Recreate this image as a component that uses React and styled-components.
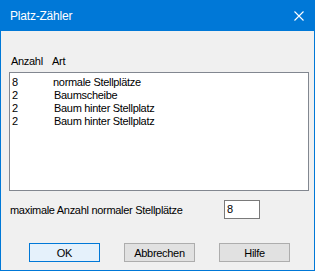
import React from 'react';
import styled, { createGlobalStyle } from 'styled-components';

const GlobalStyle = createGlobalStyle`
  html, body {
    margin: 0;
    padding: 0;
    background: #ffffff;
  }
  * {
    box-sizing: border-box;
  }
`;

const Window = styled.div`
  width: 315px;
  height: 271px;
  display: flex;
  flex-direction: column;
  background: #f0f0f0;
  border: 1px solid #0078d7;
  border-top: none;
  font-family: "Liberation Sans", Arial, sans-serif;
  font-size: 11px;
  letter-spacing: -0.3px;
  color: #000;
`;

const TitleBar = styled.div`
  height: 31px;
  margin: 0 -1px;
  background: #0078d7;
  color: #fff;
  display: flex;
  align-items: center;
  justify-content: space-between;
  padding: 0 10px 0 10px;
  font-size: 12px;
  letter-spacing: -0.2px;
`;

const Title = styled.span`
  padding-top: 1px;
`;

const CloseIcon = styled.svg`
  width: 10px;
  height: 10px;
  margin-right: 1px;
`;

const Body = styled.div`
  flex: 1;
  display: flex;
  flex-direction: column;
  padding: 24px 6px 0 8px;
`;

const Columns = styled.div`
  display: grid;
  grid-template-columns: 41px 1fr;
  line-height: 13px;
  padding-left: 2px;
`;

const HeaderRow = styled(Columns)`
  height: 13px;
  margin-bottom: 4px;
`;

const ListBox = styled.div`
  width: 300px;
  height: 119px;
  background: #fff;
  border: 1px solid #828790;
  padding: 3px 0 0 0;
`;

const Cell = styled.span`
  padding-left: ${p => p.$shift || 0}px;
  white-space: nowrap;
`;

const FieldRow = styled.div`
  display: flex;
  align-items: center;
  justify-content: space-between;
  margin-top: 9px;
  width: 251px;
  padding-left: 1px;
`;

const Input = styled.div`
  width: 36px;
  height: 19px;
  background: #fff;
  border: 1px solid #7a7a7a;
  padding: 2px 0 0 2px;
  line-height: 13px;
`;

const ButtonRow = styled.div`
  display: flex;
  gap: 24px;
  margin-top: 24px;
  padding-left: 20px;
`;

const Button = styled.div`
  width: 71px;
  height: 19px;
  display: flex;
  align-items: center;
  justify-content: center;
  background: ${p => (p.$default ? '#e5f1fb' : '#e1e1e1')};
  border: 1px solid ${p => (p.$default ? '#0078d7' : '#adadad')};
`;

const rows = [
  { count: '8', kind: 'normale Stellplätze', shift: 0 },
  { count: '2', kind: 'Baumscheibe', shift: 1 },
  { count: '2', kind: 'Baum hinter Stellplatz', shift: 1 },
  { count: '2', kind: 'Baum hinter Stellplatz', shift: 1 },
];

export default function App() {
  return (
    <>
      <GlobalStyle />
      <Window>
        <TitleBar>
          <Title>Platz-Zähler</Title>
          <CloseIcon viewBox="0 0 10 10">
            <path d="M0.5 0.5 L9.5 9.5 M9.5 0.5 L0.5 9.5" stroke="#fff" strokeWidth="1.1" fill="none" />
          </CloseIcon>
        </TitleBar>
        <Body>
          <HeaderRow>
            <Cell>Anzahl</Cell>
            <Cell>Art</Cell>
          </HeaderRow>
          <ListBox>
            {rows.map((r, i) => (
              <Columns key={i}>
                <Cell>{r.count}</Cell>
                <Cell $shift={r.shift}>{r.kind}</Cell>
              </Columns>
            ))}
          </ListBox>
          <FieldRow>
            <span>maximale Anzahl normaler Stellplätze</span>
            <Input>8</Input>
          </FieldRow>
          <ButtonRow>
            <Button $default>OK</Button>
            <Button>Abbrechen</Button>
            <Button>Hilfe</Button>
          </ButtonRow>
        </Body>
      </Window>
    </>
  );
}
